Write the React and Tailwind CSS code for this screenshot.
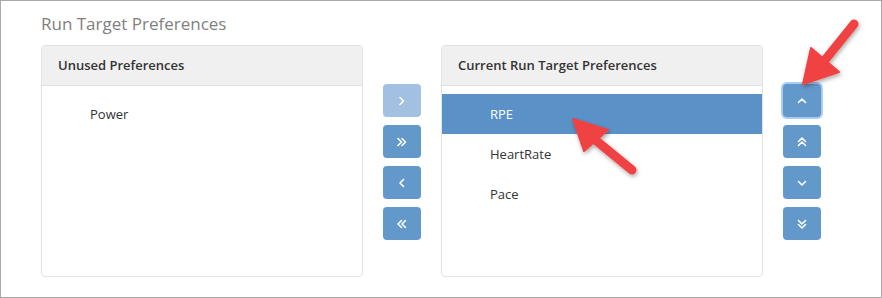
import React from "react";

const Chevron = ({ dir = "right", double = false }) => {
  const paths = {
    right: double ? ["M1 1.5 L4.5 5 L1 8.5", "M5 1.5 L8.5 5 L5 8.5"] : ["M3 1.5 L6.5 5 L3 8.5"],
    left: double ? ["M4.5 1.5 L1 5 L4.5 8.5", "M8.5 1.5 L5 5 L8.5 8.5"] : ["M6.5 1.5 L3 5 L6.5 8.5"],
    up: double ? ["M1.5 4.5 L5 1 L8.5 4.5", "M1.5 8.5 L5 5 L8.5 8.5"] : ["M1.5 6.5 L5 3 L8.5 6.5"],
    down: double ? ["M1.5 1.5 L5 5 L8.5 1.5", "M1.5 5.5 L5 9 L8.5 5.5"] : ["M1.5 3.5 L5 7 L8.5 3.5"],
  };
  return (
    <svg width="10" height="10" viewBox="0 0 10 10" fill="none" stroke="white" strokeWidth="1.6" strokeLinecap="round" strokeLinejoin="round">
      {paths[dir].map((d) => (
        <path key={d} d={d} />
      ))}
    </svg>
  );
};

const MoveButton = ({ dir, double, disabled, focused }) => (
  <button
    className={
      "flex h-[33px] w-[38px] items-center justify-center rounded-[4px] " +
      (disabled ? "bg-[#a2c1e2] " : "bg-[#6398cb] ") +
      (focused ? "ring-2 ring-[#a9cbf4]" : "")
    }
  >
    <Chevron dir={dir} double={double} />
  </button>
);

const Panel = ({ title, items, selected }) => (
  <div className="h-[232px] w-[322px] overflow-hidden rounded-[4px] border border-[#e2e2e2] bg-white">
    <div className="flex h-[40px] items-center border-b border-[#e2e2e2] bg-[#f0f0f0] pl-[16px] text-[13px] font-semibold text-[#333]">
      {title}
    </div>
    <ul className="pt-[8px]">
      {items.map((item) => (
        <li
          key={item}
          className={
            "flex h-[40px] items-center pl-[48px] pt-[2px] text-[13px] " +
            (item === selected ? "bg-[#5a92c8] text-white" : "text-[#333]")
          }
        >
          {item}
        </li>
      ))}
    </ul>
  </div>
);

const Arrow = ({ tail, tip, wingA, wingB }) => (
  <g filter="url(#shadow)">
    <line x1={tail[0]} y1={tail[1]} x2={(wingA[0] + wingB[0]) / 2} y2={(wingA[1] + wingB[1]) / 2} stroke="#f04242" strokeWidth="9" strokeLinecap="round" />
    <polygon points={`${tip[0]},${tip[1]} ${wingA[0]},${wingA[1]} ${wingB[0]},${wingB[1]}`} fill="#f04242" stroke="#f04242" strokeWidth="2" strokeLinejoin="round" />
  </g>
);

export default function App() {
  return (
    <div className="relative h-[298px] w-[882px] border border-[#a9a9a9] bg-white pl-[40px] pt-[11px] font-['Open_Sans',sans-serif]">
      <h1 className="text-[17px] leading-[24px] text-[#808080]">Run Target Preferences</h1>
      <div className="mt-[9px] flex items-start">
        <Panel title="Unused Preferences" items={["Power"]} />
        <div className="ml-[20px] mt-[39px] flex flex-col gap-[8px]">
          <MoveButton dir="right" disabled />
          <MoveButton dir="right" double />
          <MoveButton dir="left" />
          <MoveButton dir="left" double />
        </div>
        <div className="ml-[20px]">
          <Panel title="Current Run Target Preferences" items={["RPE", "HeartRate", "Pace"]} selected="RPE" />
        </div>
        <div className="ml-[20px] mt-[39px] flex flex-col gap-[8px]">
          <MoveButton dir="up" focused />
          <MoveButton dir="up" double />
          <MoveButton dir="down" />
          <MoveButton dir="down" double />
        </div>
      </div>
      <svg className="pointer-events-none absolute left-0 top-0" width="882" height="298">
        <defs>
          <filter id="shadow" x="-30%" y="-30%" width="160%" height="160%">
            <feDropShadow dx="1" dy="2" stdDeviation="2" floodColor="#000" floodOpacity="0.35" />
          </filter>
        </defs>
        <Arrow tail={[853, 23]} tip={[802, 83]} wingA={[810, 47]} wingB={[838, 71]} />
        <Arrow tail={[631, 169]} tip={[572, 118]} wingA={[607, 129]} wingB={[583, 150]} />
      </svg>
    </div>
  );
}
